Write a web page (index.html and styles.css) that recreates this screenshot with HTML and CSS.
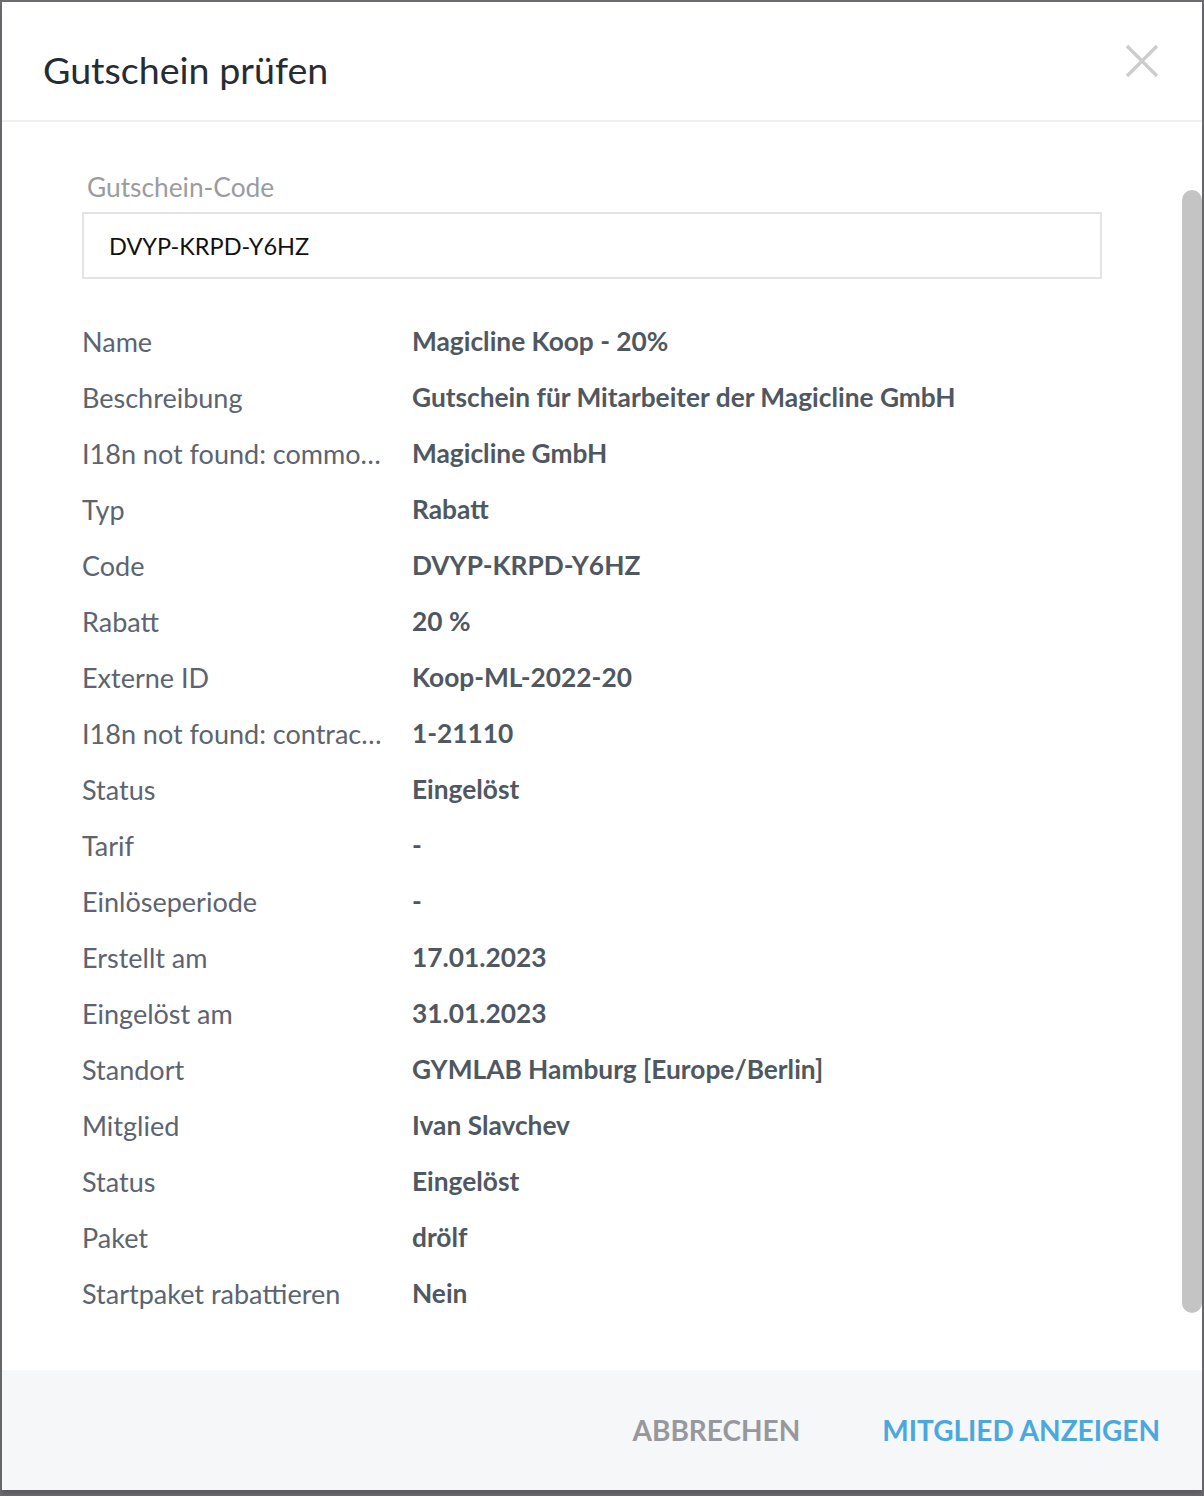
FILE: index.html
```html
<!DOCTYPE html>
<html lang="de">
<head>
<meta charset="utf-8">
<title>Gutschein prüfen</title>
<link rel="stylesheet" href="styles.css">
</head>
<body>
<div class="dialog">
  <div class="dialog-header">
    <h1 class="dialog-title">Gutschein prüfen</h1>
    <button class="close-btn" aria-label="Schließen">
      <svg width="34" height="34" viewBox="0 0 34 34"><path d="M2 2 L32 32 M32 2 L2 32" stroke="#cccccc" stroke-width="3.2" fill="none"/></svg>
    </button>
  </div>
  <div class="dialog-body">
    <label class="field-label">Gutschein-Code</label>
    <div class="field-input">DVYP-KRPD-Y6HZ</div>
    <div class="details">
      <div class="row"><div class="k">Name</div><div class="v">Magicline Koop - 20%</div></div>
      <div class="row"><div class="k">Beschreibung</div><div class="v">Gutschein für Mitarbeiter der Magicline GmbH</div></div>
      <div class="row"><div class="k">I18n not found: commo…</div><div class="v">Magicline GmbH</div></div>
      <div class="row"><div class="k">Typ</div><div class="v">Rabatt</div></div>
      <div class="row"><div class="k">Code</div><div class="v">DVYP-KRPD-Y6HZ</div></div>
      <div class="row"><div class="k">Rabatt</div><div class="v">20 %</div></div>
      <div class="row"><div class="k">Externe ID</div><div class="v">Koop-ML-2022-20</div></div>
      <div class="row"><div class="k">I18n not found: contrac…</div><div class="v">1-21110</div></div>
      <div class="row"><div class="k">Status</div><div class="v">Eingelöst</div></div>
      <div class="row"><div class="k">Tarif</div><div class="v">-</div></div>
      <div class="row"><div class="k">Einlöseperiode</div><div class="v">-</div></div>
      <div class="row"><div class="k">Erstellt am</div><div class="v">17.01.2023</div></div>
      <div class="row"><div class="k">Eingelöst am</div><div class="v">31.01.2023</div></div>
      <div class="row"><div class="k">Standort</div><div class="v">GYMLAB Hamburg [Europe/Berlin]</div></div>
      <div class="row"><div class="k">Mitglied</div><div class="v">Ivan Slavchev</div></div>
      <div class="row"><div class="k">Status</div><div class="v">Eingelöst</div></div>
      <div class="row"><div class="k">Paket</div><div class="v">drölf</div></div>
      <div class="row"><div class="k">Startpaket rabattieren</div><div class="v">Nein</div></div>
    </div>
    <div class="scroll-thumb"></div>
  </div>
  <div class="dialog-footer">
    <button class="btn btn-cancel">ABBRECHEN</button>
    <button class="btn btn-primary">MITGLIED ANZEIGEN</button>
  </div>
</div>
</body>
</html>
```
FILE: styles.css
```css
html, body {
  margin: 0;
  padding: 0;
}
body {
  background: #6b6b70;
  font-family: "Lato", "Noto Sans", sans-serif;
  width: 1204px;
  height: 1496px;
  overflow: hidden;
}
.dialog {
  margin: 2px 0 0 2px;
  width: 1200px;
  height: 1488px;
  background: #ffffff;
  display: flex;
  flex-direction: column;
  box-shadow: 0 4px 4px rgba(0,0,0,0.15);
}
.dialog-header {
  height: 118px;
  border-bottom: 2px solid #f0f0f0;
  display: flex;
  align-items: center;
  justify-content: space-between;
  padding: 0 43px 0 41px;
}
.dialog-title {
  margin: 16px 0 0 0;
  font-size: 37.6px;
  font-weight: 400;
  color: #262c33;
  letter-spacing: 0;
}
.close-btn {
  border: 0;
  background: none;
  padding: 0;
  width: 34px;
  height: 34px;
  margin-top: 0;
  cursor: pointer;
}
.dialog-body {
  flex: 1;
  position: relative;
  padding: 50px 100px 0 80px;
}
.field-label {
  display: block;
  padding-left: 5px;
  font-size: 26.3px;
  color: #9a9ca0;
  line-height: 30px;
}
.field-input {
  margin-top: 10px;
  height: 63px;
  border: 2px solid #e1e3e6;
  padding: 0 0 0 25px;
  display: flex;
  align-items: center;
  font-size: 23.5px;
  color: #111111;
}
.details {
  margin-top: 34px;
  display: flex;
  flex-direction: column;
}
.row {
  display: flex;
  height: 56px;
  align-items: center;
}
.k {
  flex: 0 0 auto;
  width: 330px;
  font-size: 27px;
  color: #5b6470;
  white-space: nowrap;
}
.v {
  font-size: 26.3px;
  color: #4f5861;
  font-weight: 700;
}
.scroll-thumb {
  position: absolute;
  right: 0;
  top: 68px;
  width: 20px;
  height: 1123px;
  background: #c4c4c4;
  border-radius: 10px;
}
.dialog-footer {
  height: 120px;
  background: #f6f7f9;
  display: flex;
  align-items: center;
  justify-content: flex-end;
  gap: 82px;
  padding-right: 42px;
}
.btn {
  border: 0;
  background: none;
  padding: 0;
  font-family: inherit;
  font-size: 28px;
  font-weight: 700;
  letter-spacing: 0;
  cursor: pointer;
}
.btn-cancel { color: #97989d; }
.btn-primary { color: #4aa8dc; }
```
